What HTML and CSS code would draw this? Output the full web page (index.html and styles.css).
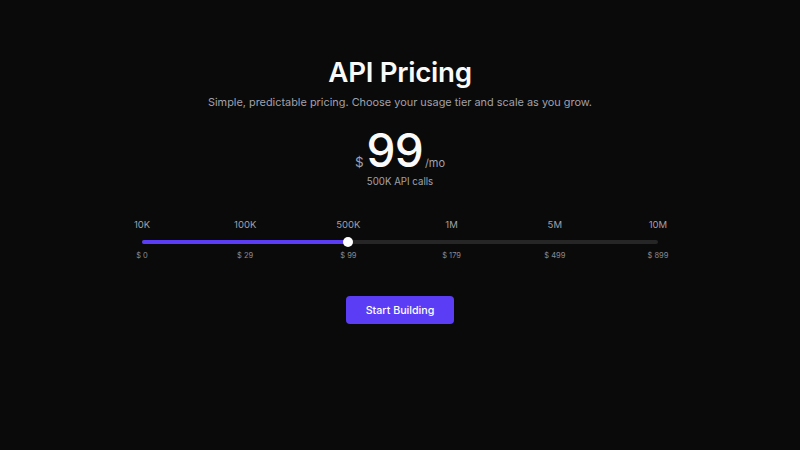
FILE: index.html
```html
<!DOCTYPE html>
<html>
<head>
<meta charset="utf-8">
<link rel="stylesheet" href="styles.css">
</head>
<body>
<main class="page">
  <h1 class="title">API Pricing</h1>
  <p class="subtitle">Simple, predictable pricing. Choose your usage tier and scale as you grow.</p>
  <div class="price">
    <span class="currency">$</span>
    <span class="amount">99</span>
    <span class="period">/mo</span>
  </div>
  <div class="calls">500K API calls</div>
  <div class="slider">
    <div class="ticks">
      <span>10K</span><span>100K</span><span>500K</span><span>1M</span><span>5M</span><span>10M</span>
    </div>
    <div class="track">
      <div class="fill" style="width:40%"></div>
      <div class="thumb" style="left:40%"></div>
    </div>
    <div class="ticks prices">
      <span>$ 0</span><span>$ 29</span><span>$ 99</span><span>$ 179</span><span>$ 499</span><span>$ 899</span>
    </div>
  </div>
  <button class="cta">Start Building</button>
</main>
</body>
</html>
```
FILE: styles.css
```css
* { box-sizing: border-box; }
html, body { margin: 0; padding: 0; }
body {
  background: #0a0a0a;
  color: #fafafa;
  font-family: Inter, "Noto Sans", sans-serif;
  width: 800px;
  height: 450px;
  overflow: hidden;
}
.page {
  display: flex;
  flex-direction: column;
  align-items: center;
  padding-top: 54px;
}
.title {
  margin: 0;
  font-size: 27.7px;
  font-weight: 600;
  line-height: 36px;
  letter-spacing: -0.3px;
}
.subtitle {
  margin: 3px 0 0;
  font-size: 10.9px;
  line-height: 18px;
  color: #a1a1aa;
}
.price {
  display: flex;
  align-items: baseline;
  margin-top: 14px;
  height: 50px;
}
.currency {
  font-size: 13.5px;
  color: #a1a1aa;
  margin-right: 3px;
}
.amount {
  font-size: 46px;
  font-weight: 500;
  line-height: 50px;
  letter-spacing: -0.8px;
}
.period {
  font-size: 11px;
  color: #a1a1aa;
  margin-left: 2px;
}
.calls {
  margin-top: 1px;
  font-size: 9.7px;
  color: #a1a1aa;
}
.slider {
  margin-top: 32px;
  width: 619.2px;
  display: flex;
  flex-direction: column;
}
.ticks {
  display: grid;
  grid-template-columns: repeat(6, 1fr);
  text-align: center;
  font-size: 9.5px;
  color: #a1a1aa;
  line-height: 12px;
}
.ticks.prices {
  font-size: 7.5px;
  color: #8a8a93;
  margin-top: 6px;
}
.track {
  position: relative;
  margin: 9px 51.6px 0;
  height: 4px;
  border-radius: 2px;
  background: #262626;
}
.fill {
  height: 100%;
  border-radius: 2px;
  background: #5b3df5;
}
.thumb {
  position: absolute;
  top: 50%;
  width: 10px;
  height: 10px;
  margin: -5px 0 0 -5px;
  border-radius: 50%;
  background: #ffffff;
}
.cta {
  margin-top: 34px;
  width: 108px;
  height: 28px;
  border: none;
  border-radius: 4px;
  background: #5b3df5;
  color: #ffffff;
  font-family: Inter, "Noto Sans", sans-serif;
  font-size: 10.7px;
  font-weight: 500;
}
```
